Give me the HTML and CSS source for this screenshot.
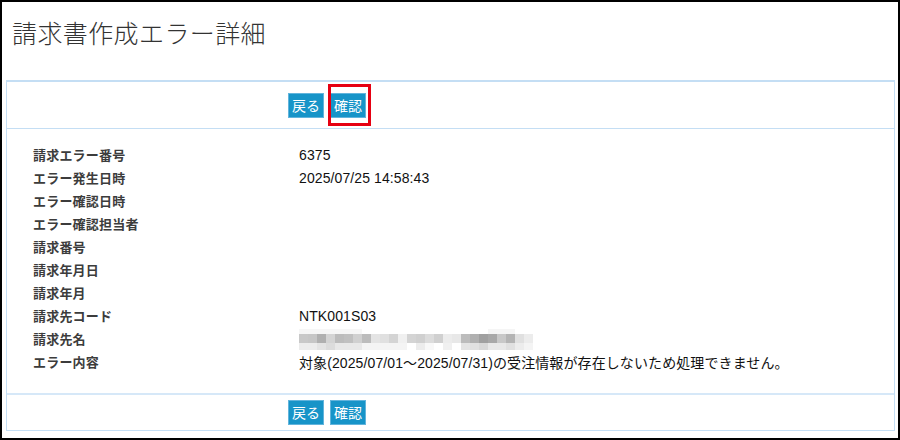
FILE: index.html
```html
<!DOCTYPE html>
<html lang="ja">
<head>
	<meta charset="UTF-8">
	<title>請求書作成エラー詳細</title>
	<link rel="stylesheet" href="styles.css">
</head>
<body>
	<div class="frame">
		<h1 class="page_title">請求書作成エラー詳細</h1>

		<div class="panel">
			<div class="btn_bar">
				<button class="btn">戻る</button>
				<span class="btn_mark">
					<button class="btn">確認</button>
					<i class="mark"></i>
				</span>
			</div>

			<table class="detail">
				<tr><th>請求エラー番号</th><td>6375</td></tr>
				<tr><th>エラー発生日時</th><td>2025/07/25 14:58:43</td></tr>
				<tr><th>エラー確認日時</th><td></td></tr>
				<tr><th>エラー確認担当者</th><td></td></tr>
				<tr><th>請求番号</th><td></td></tr>
				<tr><th>請求年月日</th><td></td></tr>
				<tr><th>請求年月</th><td></td></tr>
				<tr><th>請求先コード</th><td>NTK001S03</td></tr>
				<tr>
					<th>請求先名</th>
					<td>
						<!-- 顧客名はモザイク -->
						<svg class="blur" width="234" height="21" viewBox="0 0 234 21">
							<rect x="0" y="0" width="63" height="5" fill="#f6f6f6"/>
							<rect x="189" y="0" width="27" height="5" fill="#f5f5f5"/>
							<g transform="translate(0,5)">
								<rect x="0" width="9" height="9" fill="#c8c8c8"/>
								<rect x="9" width="9" height="9" fill="#c6c6c6"/>
								<rect x="18" width="9" height="9" fill="#b0b0b0"/>
								<rect x="27" width="9" height="9" fill="#d4d4d4"/>
								<rect x="36" width="9" height="9" fill="#bcbcbc"/>
								<rect x="45" width="9" height="9" fill="#c0c0c0"/>
								<rect x="54" width="9" height="9" fill="#d0d0d0"/>
								<rect x="63" width="9" height="9" fill="#bcbcbc"/>
								<rect x="72" width="9" height="9" fill="#e4e4e4"/>
								<rect x="81" width="9" height="9" fill="#e0e0e0"/>
								<rect x="90" width="9" height="9" fill="#d4d4d4"/>
								<rect x="99" width="9" height="9" fill="#f0f0f0"/>
								<rect x="108" width="9" height="9" fill="#d4d4d4"/>
								<rect x="117" width="9" height="9" fill="#d0d0d0"/>
								<rect x="126" width="9" height="9" fill="#dcdcdc"/>
								<rect x="135" width="9" height="9" fill="#d0d0d0"/>
								<rect x="144" width="9" height="9" fill="#ececec"/>
								<rect x="153" width="9" height="9" fill="#e8e8e8"/>
								<rect x="162" width="9" height="9" fill="#bcbcbc"/>
								<rect x="171" width="9" height="9" fill="#b0b0b0"/>
								<rect x="180" width="9" height="9" fill="#a0a0a0"/>
								<rect x="189" width="9" height="9" fill="#a8a8a8"/>
								<rect x="198" width="9" height="9" fill="#c8c8c8"/>
								<rect x="207" width="9" height="9" fill="#b4b4b4"/>
								<rect x="216" width="9" height="9" fill="#e0e0e0"/>
								<rect x="225" width="9" height="9" fill="#ececec"/>
							</g>
							<g transform="translate(0,14)">
								<rect x="0" width="18" height="7" fill="#ececec"/>
								<rect x="18" width="9" height="7" fill="#e4e4e4"/>
								<rect x="27" width="9" height="7" fill="#dcdcdc"/>
								<rect x="36" width="27" height="7" fill="#e8e8e8"/>
								<rect x="63" width="45" height="7" fill="#f4f4f4"/>
								<rect x="117" width="9" height="7" fill="#ececec"/>
								<rect x="126" width="9" height="7" fill="#f8f8f8"/>
								<rect x="144" width="9" height="7" fill="#f0f0f0"/>
								<rect x="162" width="9" height="7" fill="#e4e4e4"/>
								<rect x="171" width="9" height="7" fill="#e0e0e0"/>
								<rect x="180" width="9" height="7" fill="#d8d8d8"/>
								<rect x="189" width="18" height="7" fill="#e8e8e8"/>
								<rect x="207" width="9" height="7" fill="#e0e0e0"/>
								<rect x="216" width="9" height="7" fill="#ececec"/>
								<rect x="225" width="9" height="7" fill="#f4f4f4"/>
							</g>
						</svg>
					</td>
				</tr>
				<tr><th>エラー内容</th><td>対象(2025/07/01～2025/07/31)の受注情報が存在しないため処理できません。</td></tr>
			</table>

			<div class="btn_bar btn_bar_bottom">
				<button class="btn">戻る</button>
				<button class="btn">確認</button>
			</div>
		</div>
	</div>
</body>
</html>
```

FILE: styles.css
```css
*{
	margin:0;
	padding:0;
	box-sizing:border-box;
}

body{
	background-color:#fff;
	font-family:"Liberation Sans","Noto Sans CJK JP",sans-serif;
}

.frame{
	width:900px;
	height:440px;
	border:2px solid #000;
	background-color:#fff;
}

.page_title{
	height:78px;
	padding:13px 0 0 10px;
	font-family:"Noto Sans CJK JP",sans-serif;
	font-size:25px;
	font-weight:300;
	letter-spacing:0.4px;
	line-height:34px;
	color:#333;
}

.panel{
	margin:0 3px 0 4px;
	border:1px solid #c4def4;
	border-top-width:2px;
}

.btn_bar{
	height:47px;
	display:flex;
	align-items:center;
	gap:6px;
	padding-left:281px;
	border-bottom:1px solid #c4def4;
}

.btn_bar_bottom{
	height:37px;
	border-bottom:0;
	border-top:2px solid #d6e8f8;
}

.btn{
	height:25px;
	padding:0 3px;
	border:1px solid #62b4dc;
	background-color:#1794c8;
	color:#fff;
	font-family:"Noto Sans CJK JP",sans-serif;
	font-size:14px;
	line-height:23px;
}

.btn_mark{
	position:relative;
	display:flex;
}

.mark{
	position:absolute;
	left:-2px;
	top:-9px;
	right:-5px;
	bottom:-8px;
	border:3px solid #e60012;
}

.detail{
	border-collapse:collapse;
	margin:14px 0 20px 26px;
}

.detail th,
.detail td{
	height:23px;
	padding:0;
	vertical-align:middle;
	text-align:left;
}

.detail th{
	width:266px;
	font-family:"Noto Sans CJK JP",sans-serif;
	font-size:13px;
	font-weight:bold;
	letter-spacing:0.2px;
	color:#3c3c3c;
}

.detail td{
	font-size:14px;
	letter-spacing:0.1px;
	color:#111;
}

.blur{
	display:block;
	margin-top:1px;
}
```
